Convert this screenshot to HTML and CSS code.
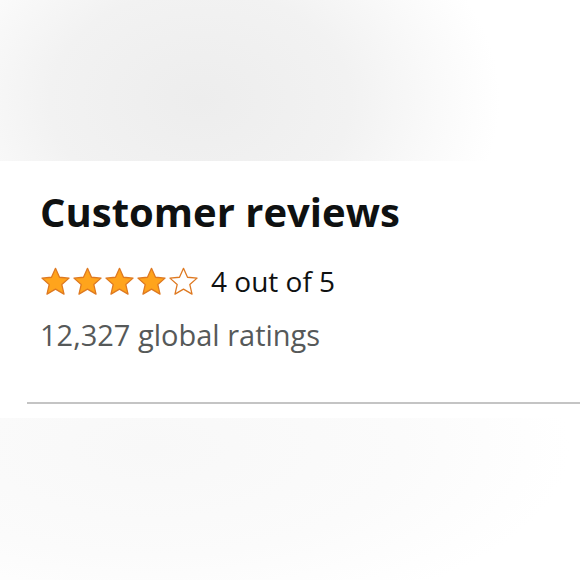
FILE: index.html
```html
<!DOCTYPE html>
<html lang="en">
<head>
    <meta charset="UTF-8">
    <meta name="viewport" content="width=device-width, initial-scale=1.0">
    <title>Customer reviews</title>
    <link rel="stylesheet" href="styles.css">
</head>
<body>

    <div class="top-blur"></div>

    <div class="reviews">
        <h2 class="reviews-title">Customer reviews</h2>

        <div class="rating-row">
            <div class="stars">
                <svg class="star" viewBox="0 0 24 24"><path class="full" d="M12 1.8l3.1 6.9 7.4.7-5.6 5 1.7 7.4L12 17.9l-6.6 3.9 1.7-7.4-5.6-5 7.4-.7z"/></svg>
                <svg class="star" viewBox="0 0 24 24"><path class="full" d="M12 1.8l3.1 6.9 7.4.7-5.6 5 1.7 7.4L12 17.9l-6.6 3.9 1.7-7.4-5.6-5 7.4-.7z"/></svg>
                <svg class="star" viewBox="0 0 24 24"><path class="full" d="M12 1.8l3.1 6.9 7.4.7-5.6 5 1.7 7.4L12 17.9l-6.6 3.9 1.7-7.4-5.6-5 7.4-.7z"/></svg>
                <svg class="star" viewBox="0 0 24 24"><path class="full" d="M12 1.8l3.1 6.9 7.4.7-5.6 5 1.7 7.4L12 17.9l-6.6 3.9 1.7-7.4-5.6-5 7.4-.7z"/></svg>
                <svg class="star" viewBox="0 0 24 24"><path class="empty" d="M12 1.8l3.1 6.9 7.4.7-5.6 5 1.7 7.4L12 17.9l-6.6 3.9 1.7-7.4-5.6-5 7.4-.7z"/></svg>
            </div>
            <span class="rating-text">4 out of 5</span>
        </div>

        <p class="rating-count">12,327 global ratings</p>
    </div>

    <hr class="divider">

    <div class="bottom-blur"></div>

</body>
</html>
```

FILE: styles.css
```css
/* Basic reset */
* {
    margin: 0;
    padding: 0;
    box-sizing: border-box;
}

body {
    font-family: "Open Sans", Arial, sans-serif;
    background-color: #fff;
    color: #0f1111;
    width: 580px;
    height: 580px;
    overflow: hidden;
}

/* Blurry strip at the top */
.top-blur {
    height: 161px;
    background: radial-gradient(ellipse 300px 220px at 200px 100px, #ededed 0%, #f2f2f2 50%, #fafafa 80%, #fff 100%);
}

.reviews {
    padding: 27px 0 0 40px;
    height: 241px;
}

.reviews-title {
    font-size: 40px;
    font-weight: 700;
    line-height: 48px;
}

.rating-row {
    display: flex;
    align-items: center;
    height: 38px;
    margin-top: 26px;
}

.stars {
    display: flex;
    gap: 1px;
}

.star {
    width: 31px;
    height: 31px;
}

.star .full {
    fill: #ffa41c;
    stroke: #de7921;
    stroke-width: 1;
    stroke-linejoin: round;
}

.star .empty {
    fill: #fff;
    stroke: #de7921;
    stroke-width: 1;
    stroke-linejoin: round;
}

.rating-text {
    margin-left: 12px;
    font-size: 28px;
    line-height: 38px;
}

.rating-count {
    margin-top: 16px;
    font-size: 29px;
    line-height: 38px;
    color: #565959;
}

/* Gray line under the section */
.divider {
    border: none;
    height: 2px;
    background-color: #c4c4c4;
    margin-left: 27px;
}

.bottom-blur {
    height: 165px;
    margin-top: 14px;
    background: radial-gradient(ellipse 420px 180px at 150px 30px, #f8f8f8 0%, #fbfbfb 60%, #fff 100%);
}
```
